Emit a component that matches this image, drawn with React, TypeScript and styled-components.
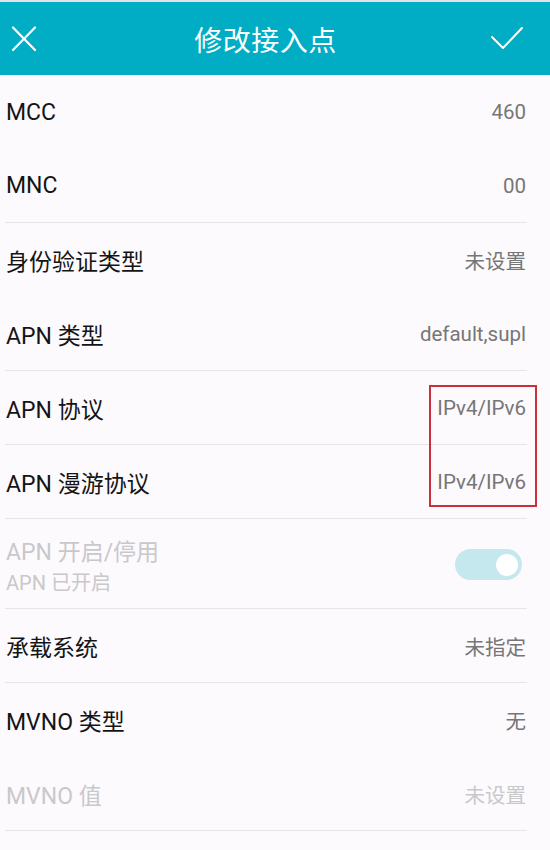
import styled, { createGlobalStyle } from 'styled-components'

const GlobalStyle = createGlobalStyle`
  html, body {
    margin: 0;
    padding: 0;
    background: #fcfafd;
  }
  body {
    font-family: Roboto, 'Noto Sans CJK SC', sans-serif;
    -webkit-font-smoothing: antialiased;
  }
`

type Item = {
  label: string
  value?: string
  disabled?: boolean
}

const GROUPS: Item[][] = [
  [
    { label: 'MCC', value: '460' },
    { label: 'MNC', value: '00' }
  ],
  [
    { label: '身份验证类型', value: '未设置' },
    { label: 'APN 类型', value: 'default,supl' }
  ],
  [{ label: 'APN 协议', value: 'IPv4/IPv6' }],
  [{ label: 'APN 漫游协议', value: 'IPv4/IPv6' }]
]

const LOWER_GROUPS: Item[][] = [
  [{ label: '承载系统', value: '未指定' }],
  [
    { label: 'MVNO 类型', value: '无' },
    { label: 'MVNO 值', value: '未设置', disabled: true }
  ]
]

const CloseIcon = () => (
  <svg width="26" height="26" viewBox="0 0 26 26" fill="none" stroke="#fff" strokeWidth="2.2" strokeLinecap="round">
    <path d="M2 1.5 L24 24" />
    <path d="M24 1.5 L2 24" />
  </svg>
)

const CheckIcon = () => (
  <svg width="34" height="26" viewBox="0 0 34 26" fill="none" stroke="#fff" strokeWidth="2" strokeLinecap="round" strokeLinejoin="round">
    <path d="M2 11 L13 22 L32 2" />
  </svg>
)

const Settings = ({ items }: { items: Item[] }) => (
  <Group>
    {items.map((item) => (
      <Row key={item.label}>
        <Label $disabled={item.disabled}>{item.label}</Label>
        {item.value && <Value $disabled={item.disabled}>{item.value}</Value>}
      </Row>
    ))}
  </Group>
)

const App = () => {
  return (
    <Screen>
      <GlobalStyle />
      <StatusStrip />
      <Toolbar>
        <IconButton>
          <CloseIcon />
        </IconButton>
        <Title>修改接入点</Title>
        <IconButton>
          <CheckIcon />
        </IconButton>
      </Toolbar>
      <List>
        {GROUPS.map((items, i) => (
          <Settings key={i} items={items} />
        ))}
        <Group>
          <SwitchRow>
            <SwitchText>
              <Label $disabled>APN 开启/停用</Label>
              <Summary>APN 已开启</Summary>
            </SwitchText>
            <Switch>
              <Thumb />
            </Switch>
          </SwitchRow>
        </Group>
        {LOWER_GROUPS.map((items, i) => (
          <Settings key={i} items={items} />
        ))}
        <Highlight />
      </List>
    </Screen>
  )
}

const Screen = styled.div`
  width: 550px;
  height: 850px;
  overflow: hidden;
  background: #fcfafd;
`

const StatusStrip = styled.div`
  height: 2px;
  background: #e3e3e6;
`

const Toolbar = styled.div`
  height: 73px;
  background: #00adc4;
  display: flex;
  align-items: center;
  padding: 0 26px 0 11px;
`

const IconButton = styled.div`
  display: flex;
  align-items: center;
  justify-content: center;
  margin-top: 1px;
`

const Title = styled.div`
  flex: 1;
  text-align: center;
  color: #fff;
  font-size: 28px;
  letter-spacing: 0.5px;
  padding-left: 4px;
`

const List = styled.div`
  position: relative;
`

const Group = styled.div`
  margin: 0 23px 0 5px;
  border-bottom: 1px solid #e6e4e8;
`

const Row = styled.div`
  height: 74px;
  display: flex;
  align-items: center;
  justify-content: space-between;
  padding-right: 1px;

  &:last-child {
    height: 73px;
  }
`

const Label = styled.span<{ $disabled?: boolean }>`
  font-size: 23px;
  color: ${(p) => (p.$disabled ? '#c9c8cb' : '#141414')};
  padding-left: 1px;
`

const Value = styled.span<{ $disabled?: boolean }>`
  font-size: 20.5px;
  color: ${(p) => (p.$disabled ? '#c9c8cb' : '#767676')};
`

const SwitchRow = styled.div`
  height: 89px;
  display: flex;
  align-items: center;
  justify-content: space-between;
`

const SwitchText = styled.div`
  display: flex;
  flex-direction: column;
  margin-top: 2px;
`

const Summary = styled.span`
  font-size: 20px;
  color: #c9c8cb;
  padding-left: 1px;
`

const Switch = styled.div`
  width: 67px;
  height: 31px;
  border-radius: 16px;
  background: #c5e7ee;
  display: flex;
  align-items: center;
  justify-content: flex-end;
  padding-right: 4px;
  box-sizing: border-box;
  margin-right: 5px;
  margin-top: 2px;
`

const Thumb = styled.div`
  width: 22px;
  height: 22px;
  border-radius: 50%;
  background: #fff;
`

/* red outline drawn over the two protocol values */
const Highlight = styled.div`
  position: absolute;
  left: 429px;
  top: 310px;
  width: 104px;
  height: 118px;
  border: 2px solid #cc2f3a;
  pointer-events: none;
`

export default App
